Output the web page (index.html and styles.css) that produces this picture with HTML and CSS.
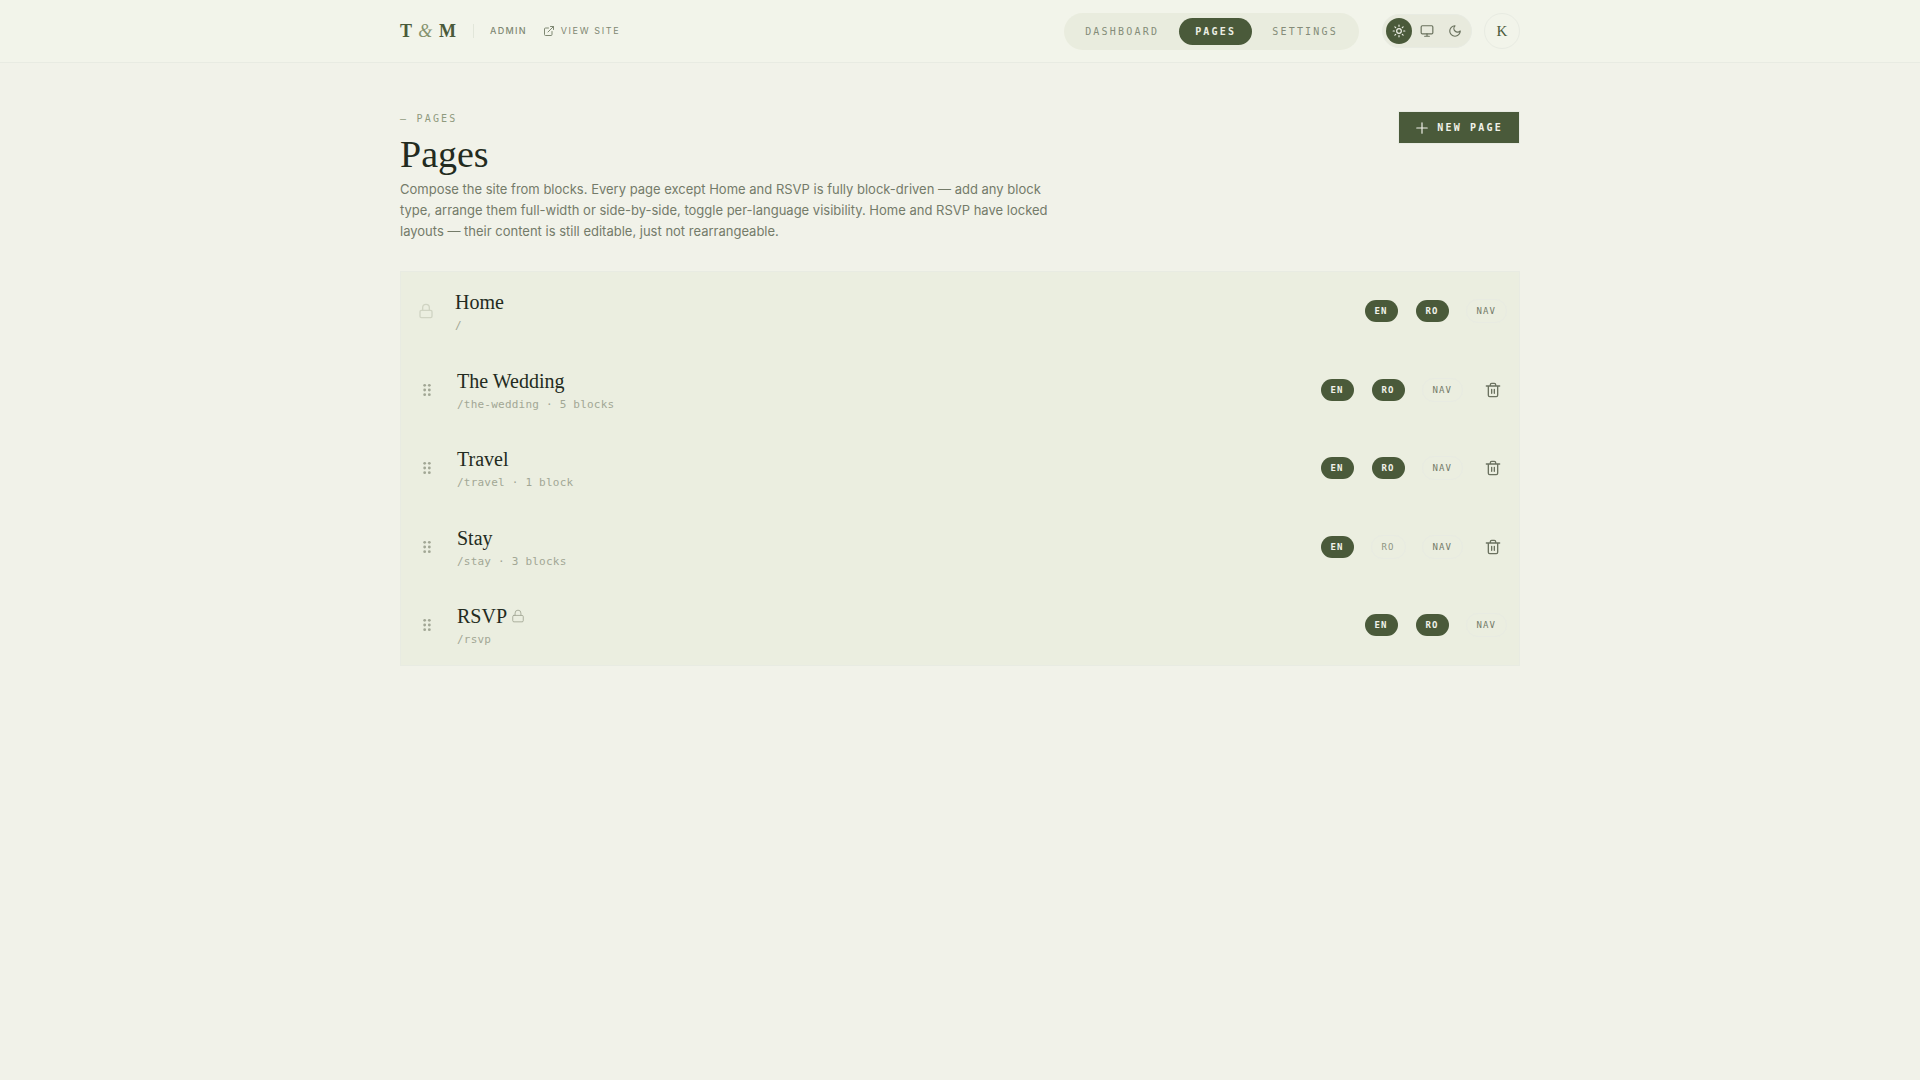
FILE: index.html
```html
<!DOCTYPE html>
<html lang="en">
<head>
<meta charset="utf-8">
<meta name="viewport" content="width=device-width, initial-scale=1">
<title>Pages – T &amp; M Admin</title>
<link rel="stylesheet" href="styles.css">
</head>
<body>
<svg class="sprite" aria-hidden="true">
  <symbol id="external" viewBox="0 0 24 24"><path d="M15 3h6v6M10 14 21 3M18 13v6a2 2 0 0 1-2 2H5a2 2 0 0 1-2-2V8a2 2 0 0 1 2-2h6"/></symbol>
  <symbol id="sun" viewBox="0 0 24 24"><circle cx="12" cy="12" r="4"/><path d="M12 2v2M12 20v2M4.93 4.93l1.41 1.41M17.66 17.66l1.41 1.41M2 12h2M20 12h2M6.34 17.66l-1.41 1.41M19.07 4.93l-1.41 1.41"/></symbol>
  <symbol id="monitor" viewBox="0 0 24 24"><rect x="2" y="3" width="20" height="14" rx="2"/><path d="M8 21h8M12 17v4"/></symbol>
  <symbol id="moon" viewBox="0 0 24 24"><path d="M12 3a6 6 0 0 0 9 9 9 9 0 1 1-9-9Z"/></symbol>
  <symbol id="plus" viewBox="0 0 24 24"><path d="M3 12h18M12 3v18"/></symbol>
  <symbol id="lock" viewBox="0 0 24 24"><rect x="3" y="11" width="18" height="11" rx="2"/><path d="M7 11V7a5 5 0 0 1 10 0v4"/></symbol>
  <symbol id="grip" viewBox="0 0 24 24"><circle cx="8" cy="4" r="2.4"/><circle cx="16" cy="4" r="2.4"/><circle cx="8" cy="12" r="2.4"/><circle cx="16" cy="12" r="2.4"/><circle cx="8" cy="20" r="2.4"/><circle cx="16" cy="20" r="2.4"/></symbol>
  <symbol id="trash" viewBox="0 0 24 24"><path d="M2 6h20M19 6v14a2 2 0 0 1-2 2H7a2 2 0 0 1-2-2V6M8 6V4a2 2 0 0 1 2-2h4a2 2 0 0 1 2 2v2M10 11v6M14 11v6"/></symbol>
</svg>

<header class="topbar">
  <div class="container topbar-inner">
    <div class="brand">
      <a class="logo" href="#">T <em>&amp;</em> M</a>
      <span class="divider"></span>
      <span class="label">Admin</span>
      <a class="label view-site" href="#"><svg class="icon icon-12"><use href="#external"/></svg>View site</a>
    </div>
    <div class="tools">
      <nav class="tabs" aria-label="Admin">
        <a class="tab" href="#">Dashboard</a>
        <a class="tab active" href="#" aria-current="page">Pages</a>
        <a class="tab" href="#">Settings</a>
      </nav>
      <div class="account">
        <div class="theme" role="group" aria-label="Theme">
          <button class="theme-btn active" type="button" aria-label="Light"><svg class="icon icon-14"><use href="#sun"/></svg></button>
          <button class="theme-btn" type="button" aria-label="System"><svg class="icon icon-14"><use href="#monitor"/></svg></button>
          <button class="theme-btn" type="button" aria-label="Dark"><svg class="icon icon-14"><use href="#moon"/></svg></button>
        </div>
        <button class="avatar" type="button">K</button>
      </div>
    </div>
  </div>
</header>

<main class="container main">
  <div class="page-head">
    <div class="intro">
      <p class="eyebrow">— Pages</p>
      <h1>Pages</h1>
      <p class="lead">Compose the site from blocks. Every page except Home and RSVP is fully block-driven — add any block type, arrange them full-width or side-by-side, toggle per-language visibility. Home and RSVP have locked layouts — their content is still editable, just not rearrangeable.</p>
    </div>
    <button class="new-page" type="button"><svg class="icon icon-14"><use href="#plus"/></svg>New page</button>
  </div>

  <ul class="list">
    <li class="row">
      <svg class="icon icon-16 locked"><use href="#lock"/></svg>
      <div class="info"><a class="title" href="#">Home</a><span class="meta">/</span></div>
      <div class="actions"><button class="pill on" type="button">EN</button><button class="pill on" type="button">RO</button><button class="pill" type="button">NAV</button></div>
    </li>
    <li class="row">
      <button class="grip" type="button" aria-label="Reorder"><svg class="icon icon-14"><use href="#grip"/></svg></button>
      <div class="info"><a class="title" href="#">The Wedding</a><span class="meta">/the-wedding · 5 blocks</span></div>
      <div class="actions"><button class="pill on" type="button">EN</button><button class="pill on" type="button">RO</button><button class="pill" type="button">NAV</button><button class="delete" type="button" aria-label="Delete"><svg class="icon icon-16"><use href="#trash"/></svg></button></div>
    </li>
    <li class="row">
      <button class="grip" type="button" aria-label="Reorder"><svg class="icon icon-14"><use href="#grip"/></svg></button>
      <div class="info"><a class="title" href="#">Travel</a><span class="meta">/travel · 1 block</span></div>
      <div class="actions"><button class="pill on" type="button">EN</button><button class="pill on" type="button">RO</button><button class="pill" type="button">NAV</button><button class="delete" type="button" aria-label="Delete"><svg class="icon icon-16"><use href="#trash"/></svg></button></div>
    </li>
    <li class="row">
      <button class="grip" type="button" aria-label="Reorder"><svg class="icon icon-14"><use href="#grip"/></svg></button>
      <div class="info"><a class="title" href="#">Stay</a><span class="meta">/stay · 3 blocks</span></div>
      <div class="actions"><button class="pill on" type="button">EN</button><button class="pill off" type="button">RO</button><button class="pill" type="button">NAV</button><button class="delete" type="button" aria-label="Delete"><svg class="icon icon-16"><use href="#trash"/></svg></button></div>
    </li>
    <li class="row">
      <button class="grip" type="button" aria-label="Reorder"><svg class="icon icon-14"><use href="#grip"/></svg></button>
      <div class="info"><a class="title" href="#">RSVP<svg class="icon icon-14"><use href="#lock"/></svg></a><span class="meta">/rsvp</span></div>
      <div class="actions"><button class="pill on" type="button">EN</button><button class="pill on" type="button">RO</button><button class="pill" type="button">NAV</button></div>
    </li>
  </ul>
</main>
</body>
</html>
```
FILE: styles.css
```css
:root {
  --bg: #f1f2e9;
  --bar: #f2f4ea;
  --surface: #ebeee0;
  --line: #e8ebe2;
  --green: #4a5a3a;
  --ink: #232b20;
  --muted: #747b69;
  --faint: #a2a795;
  --serif: "Liberation Serif", serif;
  --sans: Inter, sans-serif;
  --mono: "DejaVu Sans Mono", monospace;
}

* { box-sizing: border-box; }

body {
  margin: 0;
  background: var(--bg);
  color: var(--ink);
  font-family: var(--sans);
}

a { color: inherit; text-decoration: none; }

button {
  padding: 0;
  border: 0;
  background: none;
  color: inherit;
  font: inherit;
  cursor: pointer;
}

.sprite { display: none; }

.icon {
  display: block;
  flex: none;
  fill: none;
  stroke: currentColor;
  stroke-width: 2;
  stroke-linecap: round;
  stroke-linejoin: round;
}
.icon-12 { width: 12px; height: 12px; }
.icon-14 { width: 14px; height: 14px; }
.icon-16 { width: 16px; height: 16px; }

.container {
  max-width: 1168px;
  margin: 0 auto;
  padding: 0 24px;
}

/* Top bar */
.topbar {
  background: var(--bar);
  border-bottom: 1px solid var(--line);
}
.topbar-inner {
  display: flex;
  align-items: center;
  justify-content: space-between;
  min-height: 62px;
}
.brand, .tools, .account { display: flex; align-items: center; }
.brand { gap: 16px; }
.tools { gap: 23px; }
.account { gap: 12px; }

.logo {
  color: var(--green);
  font: 700 18px/24px var(--serif);
  letter-spacing: 0.06em;
}
.logo em { color: #86936f; font-weight: 400; }

.divider { width: 1px; height: 14px; background: #e2e6da; }

.label {
  color: #7f8873;
  font-size: 9px;
  line-height: 12px;
  font-weight: 500;
  letter-spacing: 0.14em;
  text-transform: uppercase;
}
.view-site {
  display: flex;
  align-items: center;
  gap: 6px;
  font-weight: 400;
  letter-spacing: 0.18em;
}

.tabs {
  display: flex;
  gap: 4px;
  padding: 5px;
  border-radius: 20px;
  background: #e9ecde;
}
.tab, .eyebrow, .new-page {
  font-family: var(--mono);
  font-size: 10px;
  line-height: 15px;
  letter-spacing: 0.22em;
  text-transform: uppercase;
}
.tab {
  padding: 6px 16px;
  border-radius: 14px;
  color: #858c79;
}
.tab.active { background: var(--green); color: #eceee3; font-weight: 700; }

.theme {
  display: flex;
  gap: 2px;
  padding: 3px;
  border: 1px solid var(--line);
  border-radius: 17px;
  background: #e8eadd;
}
.theme-btn {
  display: grid;
  place-items: center;
  width: 26px;
  height: 26px;
  border-radius: 50%;
  color: #68705c;
}
.theme-btn.active { background: var(--green); color: #f1f2e9; }

.avatar {
  width: 36px;
  height: 36px;
  border: 1px solid var(--line);
  border-radius: 50%;
  color: var(--green);
  font: 15px/20px var(--serif);
}

/* Page heading */
.main { padding-top: 48px; padding-bottom: 48px; }
.page-head {
  display: flex;
  align-items: flex-start;
  justify-content: space-between;
  gap: 24px;
  margin-bottom: 29px;
}
.intro { max-width: 652px; }
.eyebrow { margin: 0 0 7px; color: #8f9a7e; }
h1 {
  margin: 0 0 4px;
  font: 400 38px/42px var(--serif);
}
.lead {
  margin: 0;
  color: var(--muted);
  font-size: 13px;
  line-height: 21px;
}
.new-page {
  display: flex;
  align-items: center;
  gap: 8px;
  padding: 8px 16px;
  border: 1px solid var(--line);
  background: var(--green);
  color: #f1f2e9;
  font-weight: 700;
  white-space: nowrap;
}

/* Page list */
.list {
  margin: 0;
  padding: 0;
  border: 1px solid var(--line);
  background: var(--surface);
  list-style: none;
}
.row {
  display: flex;
  align-items: center;
  gap: 21px;
  padding: 16px 12px 16px 17px;
}
.locked { color: #d0d4c3; }
.grip {
  display: grid;
  place-items: center;
  width: 18px;
  height: 18px;
  color: var(--faint);
}
.grip .icon { fill: currentColor; stroke: none; }
.info {
  display: flex;
  flex: 1;
  flex-direction: column;
  gap: 2px;
  min-width: 0;
}
.title {
  display: flex;
  align-items: center;
  gap: 4px;
  font: 20px/28px var(--serif);
}
.title .icon { color: var(--faint); stroke-width: 1.5; }
.meta {
  color: var(--faint);
  font: 11px/1.5 var(--mono);
  letter-spacing: 0.02em;
}
.actions { display: flex; align-items: center; gap: 16px; }
.pill {
  padding: 4px 10px;
  border: 1px solid var(--line);
  border-radius: 12px;
  color: var(--muted);
  font: 9px/14px var(--mono);
  letter-spacing: 0.12em;
}
.pill.on {
  border-color: transparent;
  background: var(--green);
  background-clip: padding-box;
  color: #f1f2e9;
  font-weight: 700;
}
.pill.off { color: #8f9684; }
.delete {
  display: grid;
  place-items: center;
  width: 28px;
  height: 28px;
  color: #6b7260;
}
```
